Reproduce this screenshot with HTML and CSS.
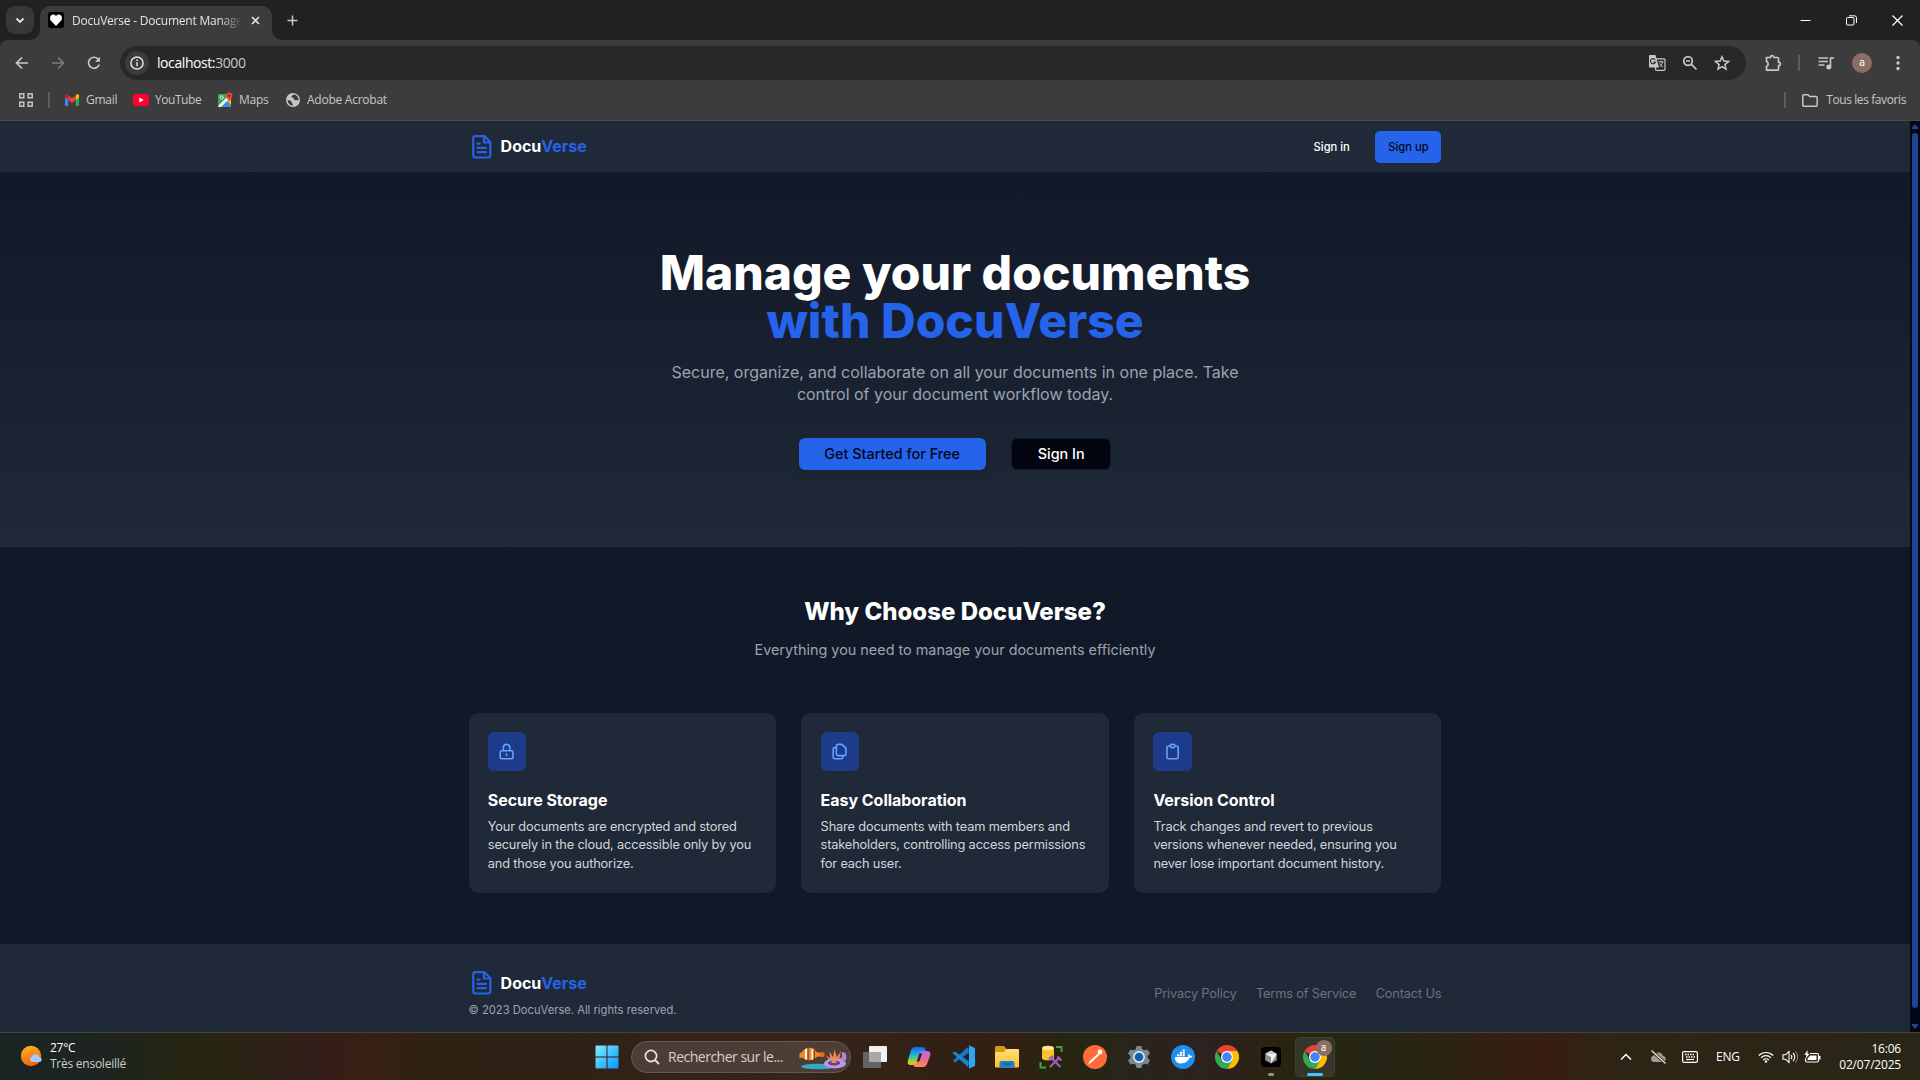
FILE: index.html
```html
<!DOCTYPE html>
<html lang="fr">
<head>
<meta charset="utf-8">
<title>DocuVerse - Document Management</title>
<link rel="stylesheet" href="styles.css">
</head>
<body>
<svg class="defs" width="0" height="0">
  <defs>
    <linearGradient id="win" x1="0" y1="0" x2="1" y2="1"><stop offset="0" stop-color="#7df0ff"/><stop offset="1" stop-color="#0a93ff"/></linearGradient>
    <linearGradient id="sun" x1="0" y1="0" x2="0.3" y2="1"><stop offset="0" stop-color="#fbb829"/><stop offset="1" stop-color="#f3650f"/></linearGradient>
    <linearGradient id="cpa" x1="0" y1="0" x2="0" y2="1"><stop offset="0" stop-color="#1b63e8"/><stop offset=".45" stop-color="#1fb4d8"/><stop offset=".75" stop-color="#8fce4a"/><stop offset="1" stop-color="#f6c419"/></linearGradient>
    <linearGradient id="cpb" x1="0" y1="0" x2="0" y2="1"><stop offset="0" stop-color="#b06bf2"/><stop offset=".5" stop-color="#f0629a"/><stop offset="1" stop-color="#ff8d54"/></linearGradient>
    <linearGradient id="fold" x1="0" y1="0" x2="0" y2="1"><stop offset="0" stop-color="#ffe07a"/><stop offset="1" stop-color="#fbc02d"/></linearGradient>
    <symbol id="doc" viewBox="0 0 24 24"><g fill="none" stroke="#2563eb" stroke-width="2" stroke-linecap="round" stroke-linejoin="round"><path d="M14.5 2H6a2 2 0 0 0-2 2v16a2 2 0 0 0 2 2h12a2 2 0 0 0 2-2V7.500L14.500 2z"/><path d="M14 2v6h6M16 13H8M16 17H8M10 9H8"/></g></symbol>
    <symbol id="chrome" viewBox="0 0 48 48">
      <path fill="#ea4335" d="M24 24 3.200 12A24 24 0 0 1 44.800 12H24z"/>
      <path fill="#fbbc04" d="M44.800 12A24 24 0 0 1 24 48L34.400 30 24 12z"/>
      <path fill="#34a853" d="M3.200 12A24 24 0 0 0 24 48L34.400 30 24 24 13.600 30z"/>
      <circle cx="24" cy="24" r="12" fill="#fff"/><circle cx="24" cy="24" r="9.500" fill="#4285f4"/>
    </symbol>
  </defs>
</svg>

<div class="tabstrip">
  <div class="tabsearch"><svg width="10" height="7" viewBox="0 0 10 7"><path d="M1.500 1.500 5 5l3.500-3.500" fill="none" stroke="#e3e3e3" stroke-width="1.800"/></svg></div>
  <div class="tab">
    <svg class="favicon" width="16" height="16" viewBox="0 0 16 16"><rect width="16" height="16" rx="2.500" fill="#000"/><path d="M8 14 2.700 8.600A3.200 3.200 0 0 1 2 6.200C2 4 3.500 2.500 5.200 2.500 6.500 2.500 7.500 3.200 8 4c.5-.8 1.500-1.500 2.800-1.500C12.500 2.500 14 4 14 6.200c0 .9-.3 1.800-.8 2.400z" fill="#fff"/></svg>
    <span class="tabtitle">DocuVerse - Document Manage</span>
    <svg width="9" height="9" viewBox="0 0 9 9"><path d="M1 1l7 7M8 1 1 8" stroke="#e3e3e3" stroke-width="1.600"/></svg>
  </div>
  <svg class="newtab" width="11" height="11" viewBox="0 0 11 11"><path d="M5.500 .5v10M.5 5.500h10" stroke="#c8c8c8" stroke-width="1.500"/></svg>
  <div class="winbtns">
    <svg width="11" height="11" viewBox="0 0 11 11"><path d="M.5 5.500h10" stroke="#fff" stroke-width="1"/></svg>
    <svg width="11" height="11" viewBox="0 0 11 11"><g fill="none" stroke="#fff"><rect x=".5" y="2.500" width="7.500" height="7.500" rx="1"/><path d="M3 .8h5.500a2 2 0 0 1 2 2V8"/></g></svg>
    <svg width="11" height="11" viewBox="0 0 11 11"><path d="M.5.5l10 10M10.500.5l-10 10" stroke="#fff" stroke-width="1.200"/></svg>
  </div>
</div>

<div class="toolbar">
  <div class="navrow">
    <div class="navicons">
      <svg width="16" height="16" viewBox="0 0 16 16"><path d="M14 8H3M8 2.500 2.500 8 8 13.500" fill="none" stroke="#c7c7c7" stroke-width="1.700"/></svg>
      <svg width="16" height="16" viewBox="0 0 16 16"><path d="M2 8h11M8 2.500 13.500 8 8 13.500" fill="none" stroke="#7c7c7c" stroke-width="1.700"/></svg>
      <svg width="16" height="16" viewBox="0 0 16 16"><path d="M13.200 9.500A5.500 5.500 0 1 1 12 4l1.300 1.500" fill="none" stroke="#c7c7c7" stroke-width="1.700"/><path d="M14 1.800v5H9z" fill="#c7c7c7"/></svg>
    </div>
    <div class="omnibox">
      <div class="info"><svg width="14" height="14" viewBox="0 0 14 14"><circle cx="7" cy="7" r="6.100" fill="none" stroke="#e3e3e3" stroke-width="1.500"/><path d="M7 6.200v4M7 3.600v1.500" stroke="#e3e3e3" stroke-width="1.500"/></svg></div>
      <span class="url">localhost:<i>3000</i></span>
      <div class="omniicons">
        <svg width="18" height="18" viewBox="0 0 18 18"><rect x="7.500" y="4.800" width="9.500" height="11.500" rx="1" fill="none" stroke="#c7c7c7" stroke-width="1.200"/><path d="M1.500 1h6l3.500 12.500H2a1 1 0 0 1-1-1V2z" fill="#c7c7c7"/><path d="M7.200 5.700A2.600 2.600 0 1 0 7.500 8H5.200" fill="none" stroke="#333" stroke-width="1.200"/><path d="M10.500 7.800h5M13 6.800v1M14.500 8c-.5 2.500-2 3.800-3 4.500M11.500 9.500c.8 1.800 2 2.500 3.500 3.500" fill="none" stroke="#c7c7c7"/></svg>
        <svg width="16" height="16" viewBox="0 0 16 16"><g fill="none" stroke="#c7c7c7" stroke-width="1.700"><circle cx="6" cy="6" r="4.300"/><path d="M9.200 9.200 14.500 14.500M4 6h4"/></g></svg>
        <svg width="16" height="16" viewBox="0 0 16 16"><path d="M8 1.800l1.800 4.300 4.700.4-3.600 3.100 1.100 4.600L8 11.700l-4 2.500 1.100-4.600L1.500 6.500l4.700-.4z" fill="none" stroke="#c7c7c7" stroke-width="1.500"/></svg>
      </div>
    </div>
    <div class="actions">
      <svg width="18" height="18" viewBox="0 0 18 18"><path d="M2.500 3.500h4a1.800 1.800 0 0 1 3.600 0h3.400a1 1 0 0 1 1 1v3.600a1.800 1.800 0 0 1 0 3.600v3.500a1 1 0 0 1-1 1h-11v-3.700a2.700 2.700 0 0 0 0-5z" fill="none" stroke="#c7c7c7" stroke-width="1.700"/></svg>
      <b class="vbar"></b>
      <svg width="16" height="14" viewBox="0 0 16 14"><path d="M.5 2h9.500M.5 5.500h9.500M.5 9h6M12.500 11V2H16" fill="none" stroke="#c7c7c7" stroke-width="1.600"/><circle cx="10.800" cy="11" r="2.500" fill="#c7c7c7"/></svg>
      <span class="avatar">a</span>
      <svg width="4" height="16" viewBox="0 0 4 16"><g fill="#c7c7c7"><circle cx="2" cy="2.500" r="1.700"/><circle cx="2" cy="8" r="1.700"/><circle cx="2" cy="13.500" r="1.700"/></g></svg>
    </div>
  </div>
  <div class="bookmarks">
    <svg width="14" height="14" viewBox="0 0 14 14"><g fill="none" stroke="#c7c7c7" stroke-width="1.500"><rect x=".8" y=".8" width="4" height="4"/><rect x="9.200" y=".8" width="4" height="4"/><rect x=".8" y="9.200" width="4" height="4"/><rect x="9.200" y="9.200" width="4" height="4"/></g></svg>
    <b class="vbar first"></b>
    <div class="bm gmail"><svg width="14" height="12" viewBox="0 0 14 12"><path d="M0 2v9a1 1 0 0 0 1 1h2.300V4.500z" fill="#4285f4"/><path d="M14 2v9a1 1 0 0 1-1 1h-2.300V4.500z" fill="#34a853"/><path d="M10.700 1.500 12 .4c.9-.6 2 0 2 1.200V3.500l-3.300 2.600z" fill="#fbbc04"/><path d="M3.300 6.100V1.500L7 4.300l3.700-2.800v4.600L7 9z" fill="#ea4335"/><path d="M0 1.600v1.900l3.300 2.600V1.500L2 .4C1.100-.2 0 .4 0 1.600z" fill="#c5221f"/></svg><span>Gmail</span></div>
    <div class="bm youtube"><svg width="16" height="12" viewBox="0 0 16 12"><rect width="16" height="12" rx="3" fill="#ff0033"/><path d="M6.300 3.500 10.700 6 6.300 8.500z" fill="#fff"/></svg><span>YouTube</span></div>
    <div class="bm maps"><svg width="15" height="16" viewBox="0 0 15 16"><rect x="0" y="2" width="13" height="13" rx="1" fill="#34a853"/><path d="M1 15 7 8l6 6v1z" fill="#4285f4"/><path d="M0 14 11 3l2 4-5 3-5 5H1z" fill="#f1f3f4"/><path d="M9 8.500 13 13V7z" fill="#fbc02d"/><circle cx="3.700" cy="5.500" r="1.600" fill="none" stroke="#fff" stroke-width=".9"/><path d="M11.200.5a3.300 3.300 0 0 1 3.300 3.400C14.500 6 12 7 11.200 10 10.500 7 8 6 8 3.900A3.300 3.300 0 0 1 11.200.5z" fill="#ea4335"/><circle cx="11.200" cy="3.800" r="1.200" fill="#8c1d13"/></svg><span>Maps</span></div>
    <div class="bm adobe"><svg width="14" height="14" viewBox="0 0 14 14"><circle cx="7" cy="7" r="7" fill="#c4c7c9"/><path d="M1.500 7.500c2-.8 4 .2 4 1.500 0 1.500 1.500 1 1.500 3.500-3 0-5-2-5.500-5zM8 1.500c-1 1-2.500 1-2.500 2.500S8 4.500 8 6s2 1.500 2.500 1l2 .5c.3-3-1.500-5.500-4.500-6z" fill="#3c3c3c"/></svg><span>Adobe Acrobat</span></div>
    <b class="vbar last"></b>
    <div class="bm all"><svg width="16" height="13" viewBox="0 0 16 13"><path d="M.8 1.800a1 1 0 0 1 1-1h4.200l1.600 1.700h6.600a1 1 0 0 1 1 1v7.700a1 1 0 0 1-1 1H1.800a1 1 0 0 1-1-1z" fill="none" stroke="#c7c7c7" stroke-width="1.500"/></svg><span>Tous les favoris</span></div>
  </div>
</div>

<div class="viewport">
  <div class="page">
    <header class="site-header"><div class="container">
      <div class="logo"><svg><use href="#doc"/></svg><span>Docu<em>Verse</em></span></div>
      <nav><a class="btn ghost">Sign in</a><a class="btn primary">Sign up</a></nav>
    </div></header>
    <section class="hero">
      <h1>Manage your documents<br><em>with DocuVerse</em></h1>
      <p>Secure, organize, and collaborate on all your documents in one place. Take control of your document workflow today.</p>
      <div class="cta"><a class="btn primary lg">Get Started for Free</a><a class="btn outline lg">Sign In</a></div>
    </section>
    <section class="features">
      <h2>Why Choose DocuVerse?</h2>
      <p class="sub">Everything you need to manage your documents efficiently</p>
      <div class="cards">
        <article class="card">
          <div class="ico"><svg viewBox="0 0 24 24"><path d="M12 15v2m-6 4h12a2 2 0 002-2v-6a2 2 0 00-2-2H6a2 2 0 00-2 2v6a2 2 0 002 2zm10-10V7a4 4 0 00-8 0v4h8z"/></svg></div>
          <h3>Secure Storage</h3>
          <p>Your documents are encrypted and stored securely in the cloud, accessible only by you and those you authorize.</p>
        </article>
        <article class="card">
          <div class="ico"><svg viewBox="0 0 24 24"><path d="M8 7v8a2 2 0 002 2h6M8 7V5a2 2 0 012-2h4.586a1 1 0 01.707.293l4.414 4.414a1 1 0 01.293.707V15a2 2 0 01-2 2h-2M8 7H6a2 2 0 00-2 2v10a2 2 0 002 2h8a2 2 0 002-2v-2"/></svg></div>
          <h3>Easy Collaboration</h3>
          <p>Share documents with team members and stakeholders, controlling access permissions for each user.</p>
        </article>
        <article class="card">
          <div class="ico"><svg viewBox="0 0 24 24"><path d="M9 5H7a2 2 0 00-2 2v12a2 2 0 002 2h10a2 2 0 002-2V7a2 2 0 00-2-2h-2M9 5a2 2 0 002 2h2a2 2 0 002-2M9 5a2 2 0 012-2h2a2 2 0 012 2"/></svg></div>
          <h3>Version Control</h3>
          <p>Track changes and revert to previous versions whenever needed, ensuring you never lose important document history.</p>
        </article>
      </div>
    </section>
    <footer class="site-footer"><div class="container">
      <div>
        <div class="logo"><svg><use href="#doc"/></svg><span>Docu<em>Verse</em></span></div>
        <p class="copy">© 2023 DocuVerse. All rights reserved.</p>
      </div>
      <div class="links"><a>Privacy Policy</a><a>Terms of Service</a><a>Contact Us</a></div>
    </div></footer>
  </div>
  <div class="scrollbar">
    <svg width="6" height="5" viewBox="0 0 6 5"><path d="M3 0l3 3.500V5H0V3.500z" fill="#1e4690"/></svg>
    <div class="thumb"></div>
    <svg width="6" height="5" viewBox="0 0 6 5"><path d="M3 5 0 1.500V0h6v1.500z" fill="#1e4690"/></svg>
  </div>
</div>

<div class="taskbar">
  <div class="weather">
    <svg width="24" height="22" viewBox="0 0 24 22"><circle cx="11" cy="11" r="10.200" fill="url(#sun)"/><path d="M11.500 17a3 3 0 0 1 .5-5.500 4 4 0 0 1 7.500.5 2.600 2.600 0 0 1 .5 5z" fill="#a9cbf8"/></svg>
    <div><span>27°C</span><span class="dim">Très ensoleillé</span></div>
  </div>
  <div class="apps">
    <div class="app"><svg width="24" height="24" viewBox="0 0 24 24"><path d="M.5 1.500a1 1 0 0 1 1-1h10v11H.5zM12.500.5h10a1 1 0 0 1 1 1v10h-11zM.5 12.500h11v11h-10a1 1 0 0 1-1-1zM12.500 12.500h11v10a1 1 0 0 1-1 1h-10z" fill="url(#win)"/></svg></div>
    <div class="search">
      <svg width="16" height="16" viewBox="0 0 16 16"><circle cx="7" cy="7" r="5.600" fill="none" stroke="#e8e4e2" stroke-width="1.700"/><path d="M11 11l4 4" stroke="#e8e4e2" stroke-width="1.800"/></svg>
      <span>Rechercher sur le...</span>
      <svg width="50" height="26" viewBox="0 0 50 26">
        <ellipse cx="20" cy="22.500" rx="17" ry="2.800" fill="#38a8c4"/>
        <path d="M1.500 9.500 4 8C7 3 15 2 18.500 8l4 .8v3.400l-4 .8C15 17.500 7 17 4.500 13.500L1.500 14.500z" fill="#f28a1e"/><path d="M7 5.500 9.500 4v12L7 15zM13.500 4.500l2 1v9.500l-2 1z" fill="#fff3e4"/><path d="M10 4v12M16.200 6v9" stroke="#452a18"/>
        <circle cx="24" cy="10.500" r="2.600" fill="#f06a15"/>
        <path d="M31 17 28 11l4 3.500-.5-7 3.500 5.500 1.500-7.500 2.500 7.500 4-6-1.500 7.500 4.500-2.500-4 5.500z" fill="#f0804c"/>
        <ellipse cx="37" cy="19.500" rx="11" ry="5" fill="#b79be6"/><ellipse cx="36" cy="19" rx="6" ry="2.500" fill="#6a3b74"/><path d="M33 19l3-5 3 5z" fill="#ff8d46"/><path d="M44 8c4 0 5 3 4 8l-4 3z" fill="#a88ad8"/>
      </svg>
    </div>
    <div class="app"><svg width="24" height="22" viewBox="0 0 24 22"><rect x="6" width="18" height="16" rx="1" fill="#f0f0f0"/><rect y="6" width="18" height="16" rx="1" fill="#646464"/><rect x="6" y="6" width="12" height="10" fill="#a8a8a8"/></svg></div>
    <div class="app"><svg width="24" height="22" viewBox="0 0 24 22"><path d="M8 1h7c2 0 3 1 3.500 3l.5 2h-3c-2 0-3 1-3.500 3L10 16c-.5 2-1.500 3-3.500 3H4c-3 0-4-2-3-5L4 4c.7-2 2-3 4-3z" fill="url(#cpa)"/><path d="M16 21H9c-1.500 0-2.500-1-3-2.500 2 0 3.500-.8 4.200-3L12.500 8c.7-2 1.700-3 3.700-3H20c3 0 4 2 3 5l-3 8c-.7 2-2 3-4 3z" fill="url(#cpb)"/><path d="M12.500 7.500h2.600l-2.800 8H9.700z" fill="#2b2017"/></svg></div>
    <div class="app"><svg width="24" height="24" viewBox="0 0 24 24"><path d="M2 15.500 17 2l1 5.500L4 17.500z" fill="#0f7bc6"/><path d="M2 8.500 17 22l1-5.500L4 6.500 1 8z" fill="#1488d4"/><path d="M17 0l6 2.500c.6.3 1 .7 1 1.300v16.400c0 .6-.4 1-1 1.300L17 24c1-.4 1-1 1-2V2c0-1 0-1.600-1-2z" fill="#2aa7f3"/></svg></div>
    <div class="app"><svg width="24" height="22" viewBox="0 0 24 22"><path d="M0 1.500A1.500 1.500 0 0 1 1.500 0H9l2.500 3V7H0z" fill="#d99a10"/><path d="M0 6h9l2.500-3H23a1 1 0 0 1 1 1v16.500a1 1 0 0 1-1 1H1a1 1 0 0 1-1-1z" fill="url(#fold)"/><path d="M4.500 21.500V17a2 2 0 0 1 2-2h11a2 2 0 0 1 2 2v4.500z" fill="#1583d4"/><path d="M8 18h8" stroke="#0c5fa8" stroke-width="1.500"/></svg></div>
    <div class="app"><svg width="24" height="24" viewBox="0 0 24 24"><path d="M3 3v10a6 2.300 0 0 0 12 0V3z" fill="#f6c22e"/><ellipse cx="9" cy="3" rx="6" ry="2.300" fill="#ffe79a"/><path d="M17 2h5.500v5M1.500 17v5.500H7" fill="none" stroke="#43a047" stroke-width="2"/><path d="M11 22l9-9M21.500 22 12 12.500M18.500 11.500l4 4M10 14l4-3" fill="none" stroke="#a35bc4" stroke-width="2.200"/></svg></div>
    <div class="app"><svg width="24" height="24" viewBox="0 0 24 24"><circle cx="12" cy="12" r="12" fill="#ff6c37"/><path d="M5 19.500 7 15.800l8-7.300 1.300 1.300L9 17z" fill="#fff"/><circle cx="17" cy="7" r="2.400" fill="#fff"/></svg></div>
    <div class="app"><svg width="24" height="24" viewBox="0 0 24 24"><path d="M9.500 1h5l.8 3.200 2 1.100 3.200-.9 2.500 4.200-2.300 2.300v2.200l2.300 2.300-2.500 4.200-3.200-.9-2 1.100-.8 3.200h-5l-.8-3.200-2-1.100-3.200.9L1 15.400l2.300-2.300v-2.200L1 8.600l2.500-4.200 3.200.9 2-1.100z" fill="#7d8791"/><circle cx="12" cy="12" r="6" fill="#dde5ec"/><circle cx="12" cy="12" r="4.300" fill="#0f5fae"/></svg></div>
    <div class="app"><svg width="24" height="24" viewBox="0 0 24 24"><circle cx="12" cy="12" r="12" fill="#1d8fec"/><path d="M4 12h13c.2-1.300 0-2.300.8-3.300.8.600 1.200 1.400 1.200 2.200.800-.2 1.600-.1 2.300.3-.5 1.200-1.500 1.600-2.800 1.600C17 16.800 14 18.500 10 18.500c-4 0-6.300-2.500-6-6.500zM6 9.300h2.200v2H6zM8.800 9.300H11v2H8.800zM11.600 9.300h2.200v2h-2.200zM8.800 6.800H11v2H8.800zM11.600 6.800h2.200v2h-2.200zM11.600 4.500h2.200v1.800h-2.200z" fill="#fff"/></svg></div>
    <div class="app"><svg width="24" height="24"><use href="#chrome"/></svg></div>
    <div class="app"><svg width="20" height="20" viewBox="0 0 20 20"><rect width="20" height="20" rx="4" fill="#000"/><path d="M10 3.500l5.800 3.300v6.500L10 16.500l-5.800-3.200V6.800z" fill="#8e8e8e"/><path d="M4.200 6.800 10 3.500l5.800 3.300z" fill="#c9c9c9"/><path d="M4.200 6.800h11.600L10 16.500V10z" fill="#f2f2f2"/></svg><i class="dot"></i></div>
    <div class="app active"><svg width="24" height="24"><use href="#chrome"/></svg><i class="line"></i><span class="badge">a</span></div>
  </div>
  <div class="tray">
    <svg width="12" height="8" viewBox="0 0 12 8"><path d="M1 6.500 6 1.500l5 5" fill="none" stroke="#fff" stroke-width="1.500"/></svg>
    <svg width="17" height="14" viewBox="0 0 17 14"><path d="M4 12a3.300 3.300 0 0 1-.3-6.500 5 5 0 0 1 9.300.3A3.200 3.200 0 0 1 13.500 12z" fill="#a39c92"/><path d="M1.500.5l14 13" stroke="#2e2716" stroke-width="3"/><path d="M1.500.5l14 13" stroke="#f0f0f0" stroke-width="1.100"/></svg>
    <svg width="16" height="12" viewBox="0 0 16 12"><rect x=".6" y=".6" width="14.800" height="10.800" rx="1.500" fill="none" stroke="#fff" stroke-width="1.200"/><path d="M3 3.500h10M4 6h9" stroke="#fff" stroke-width="1.300" stroke-dasharray="1.500 1"/><path d="M4 8.500h8" stroke="#fff" stroke-width="1.200"/></svg>
    <span class="lang">ENG</span>
    <svg width="16" height="12" viewBox="0 0 16 12"><g fill="none" stroke="#fff" stroke-width="1.200"><path d="M.8 4.500a10.200 10.200 0 0 1 14.400 0M3 6.800a7 7 0 0 1 10 0M5.200 9a4 4 0 0 1 5.600 0"/></g><circle cx="8" cy="10.500" r="1.300" fill="#fff"/></svg>
    <svg class="sound" width="17" height="14" viewBox="0 0 17 14"><g fill="none" stroke="#fff" stroke-width="1.100"><path d="M1 4.800h2.500L7 1.500v11L3.500 9.200H1z"/><path d="M9 5a3 3 0 0 1 0 4M11 3a5.500 5.500 0 0 1 0 8"/><path d="M13.300 1.300a8 8 0 0 1 0 11.400" stroke="#807a6c"/></g></svg>
    <svg width="17" height="14" viewBox="0 0 17 14"><path d="M6 3.500h7a1.500 1.500 0 0 1 1.500 1.500v5.500A1.500 1.500 0 0 1 13 12H3a1.500 1.500 0 0 1-1.500-1.500V8.500" fill="none" stroke="#fff" stroke-width="1.200"/><path d="M6 5.500h6.500V10H3.500V8.800zM15 6h1.500v3.500H15zM3.500 0 .5 5h2L1.500 9 5.500 3.800h-2z" fill="#fff"/></svg>
    <div class="clock"><span>16:06</span><span>02/07/2025</span></div>
  </div>
</div>
</body>
</html>
```
FILE: styles.css
```css
* { box-sizing: border-box; margin: 0; padding: 0; }
body {
  width: 1920px; height: 1080px; overflow: hidden;
  display: flex; flex-direction: column;
  background: #1f2221; color: #e3e3e3;
  font-family: "Open Sans", "Noto Sans", sans-serif; font-size: 12px;
}
em, i { font-style: normal; }
svg { display: block; flex: none; }
.defs { position: absolute; }

/* Browser frame */
.tabstrip { height: 40px; flex: none; display: flex; background: #1f2221; }
.tabsearch { width: 28px; height: 28px; margin: 6px 6px 0; border-radius: 9px; background: #373938; display: grid; place-items: center; }
.tab { position: relative; width: 232px; height: 34px; margin-top: 6px; padding: 0 11px 6px 8px; display: flex; align-items: center; border-radius: 10px 10px 0 0; background: #3c3c3c; }
.tab::before, .tab::after { content: ""; position: absolute; bottom: 0; width: 10px; height: 10px; }
.tab::before { left: -10px; background: radial-gradient(circle at 0 0, transparent 9.500px, #3c3c3c 10px); }
.tab::after { right: -10px; background: radial-gradient(circle at 100% 0, transparent 9.500px, #3c3c3c 10px); }
.tabtitle { width: 168px; margin: 0 11px 0 8px; overflow: hidden; white-space: nowrap; letter-spacing: -0.22px; -webkit-mask: linear-gradient(90deg, #000 148px, transparent 170px); mask: linear-gradient(90deg, #000 148px, transparent 170px); }
.newtab { margin: 15px 0 0 14.5px; }
.winbtns { margin: 15px 17px 0 auto; display: flex; gap: 35px; }
.toolbar { height: 81px; flex: none; background: #3c3c3c; border-bottom: 1px solid #4a4a48; border-radius: 8px 8px 0 0; }
.navrow { height: 46px; display: flex; align-items: center; }
.navicons { width: 120px; padding-left: 14px; display: flex; gap: 20px; }
.omnibox { width: 1626px; height: 34px; padding: 0 16px 0 5px; border-radius: 17px; background: #282828; display: flex; align-items: center; }
.info { width: 24px; height: 24px; border-radius: 50%; background: #3c3c3c; display: grid; place-items: center; }
.url { margin: 0 0 1px 8px; font-size: 14px; letter-spacing: -0.42px; color: #fff; }
.url i { color: #c7c7c7; }
.omniicons { margin-left: auto; display: flex; align-items: center; gap: 16px; }
.actions { display: flex; align-items: center; padding-left: 18px; }
.vbar { width: 2px; height: 16px; background: #5c5c5c; }
.actions .vbar { margin: 0 18px 0 16px; }
.avatar { width: 20px; height: 20px; margin: 0 24px 0 18px; border-radius: 50%; background: #8d6e63; color: #fff; font: 11px/19px Roboto, sans-serif; text-align: center; }
.bookmarks { height: 28px; padding: 0 14px 0 19px; display: flex; align-items: center; color: #c7c7c7; }
.vbar.first { margin: 0 15px; }
.bm { display: flex; align-items: center; gap: 6px; white-space: nowrap; letter-spacing: -0.25px; }
.bm span { margin-bottom: 1px; }
.gmail { width: 68px; gap: 7px; }
.youtube { width: 85px; letter-spacing: -0.45px; }
.maps { width: 68px; }
.adobe { gap: 7px; }
.vbar.last { margin: 0 16px 0 auto; }
.bm.all { gap: 8px; letter-spacing: -0.4px; }

/* Web page */
.viewport { height: 911px; flex: none; display: flex; overflow: hidden; background: #111827; }
.page { width: 1910px; font-family: Inter, sans-serif; color: #fff; }
.page em { color: #2563eb; }
.container { width: 972.8px; margin: 0 auto; display: flex; align-items: center; justify-content: space-between; }
.site-header { height: 51.2px; background: #1f2937; }
.site-header .container { height: 51.2px; }
.logo { display: flex; align-items: center; gap: 6.4px; font-size: 16px; font-weight: 700; line-height: 22.4px; }
.logo svg { width: 25.6px; height: 25.6px; }
nav { display: flex; gap: 12.8px; }
.btn { height: 32px; padding: 0 12.8px; display: flex; align-items: center; border-radius: 4.8px; font-size: 11.2px; font-weight: 500; white-space: nowrap; }
.primary { background: #2563eb; color: #020817; }
.lg { padding: 0 25.6px; font-size: 14.4px; border-radius: 6px; }
.primary.lg { box-shadow: 0 4px 8px rgba(0, 0, 0, .1); }
.outline { background: #020510; border: 1px solid #131c2e; }
.hero { height: 374.4px; padding-top: 76.8px; background: linear-gradient(#111827, #1f2937); text-align: center; }
.hero h1 { font-size: 48px; line-height: 48px; font-weight: 800; letter-spacing: 0; }
.hero p { width: 614.4px; margin: 16px auto 32px; font-size: 16px; line-height: 22.4px; color: #9ca3af; }
.cta { display: flex; justify-content: center; gap: 25.6px; }
.features { height: 397.2px; padding-top: 51.2px; text-align: center; }
.features h2 { font-size: 24px; line-height: 28.8px; font-weight: 800; }
.sub { margin-top: 12.8px; font-size: 14.4px; line-height: 22.4px; color: #9ca3af; }
.cards { width: 972.8px; margin: 51.2px auto 0; display: grid; grid-template-columns: repeat(3, 1fr); gap: 25.6px; text-align: left; }
.card { height: 179.8px; padding: 19.2px; border-radius: 9.6px; background: #1f2937; }
.ico { width: 38.4px; height: 38.4px; border-radius: 6.4px; background: #1e3a8a; display: grid; place-items: center; }
.ico svg { width: 19.2px; height: 19.2px; fill: none; stroke: #60a5fa; stroke-width: 2; stroke-linecap: round; stroke-linejoin: round; }
.card h3 { margin-top: 18.2px; font-size: 16px; line-height: 22.4px; font-weight: 700; letter-spacing: -0.03px; }
.card p { margin-top: 6.8px; font-size: 12.8px; line-height: 18.4px; letter-spacing: -0.16px; color: #d1d5db; }
.site-footer { height: 90px; padding-top: 26.4px; background: #1f2937; }
.copy { margin-top: 6.4px; font-size: 11.2px; line-height: 16px; color: #9ca3af; }
.links { margin-bottom: 1.6px; display: flex; gap: 19.4px; font-size: 12.8px; letter-spacing: -0.17px; color: #6b7280; }
.scrollbar { width: 10px; padding: 3px 2px; display: flex; flex-direction: column; justify-content: space-between; background: #020817; }
.thumb { width: 6px; height: 875px; margin-bottom: 13px; border-radius: 3px; background: #1e4690; }

/* Windows taskbar */
.taskbar { position: relative; height: 48px; display: flex; justify-content: space-between; border-top: 1px solid #4b4238; color: #fff;
  background: linear-gradient(90deg, #1a2423 0, #1e2520 110px, #242512 175px, #292414 230px, #321e19 310px, #381f14 360px, #302115 430px, #302116 560px, #35241a 800px, #322014 960px, #351f14 1000px, #26250f 1060px, #28251a 1120px, #2c2220 1200px, #2c2118 1240px, #29250f 1290px, #252615 1370px, #2c2415 1440px, #391d12 1540px, #2f2415 1600px, #2c2515 1720px, #292617 1920px); }
.weather { padding: 0 0 1px 20px; display: flex; align-items: center; gap: 6px; }
.weather span { display: block; line-height: 16px; letter-spacing: -0.25px; }
.weather .dim { color: #d0cdc8; }
.apps { position: absolute; left: 584.5px; top: 0; height: 47px; display: flex; align-items: center; }
.app { position: relative; width: 44px; height: 40px; display: grid; place-items: center; }
.search { width: 220px; height: 32px; margin: 0 1.5px 0 2.5px; padding: 0 2px 0 12px; display: flex; align-items: center; border: 1px solid #675950; border-radius: 16px; background: #4c3e36; }
.search span { flex: 1; margin: 0 0 1px 8px; font-size: 14px; letter-spacing: -0.5px; color: #d6d0cc; white-space: nowrap; }
.active { width: 40px; margin-left: 2px; border: 1px solid #40402f; border-radius: 5px; background: #35362a; }
.dot, .line { position: absolute; bottom: 1px; left: 19px; width: 6px; height: 3px; border-radius: 2px; background: #9a958c; }
.line { bottom: 0; left: 11px; width: 16px; background: #4cc2ff; }
.badge { position: absolute; left: 20px; top: 2px; width: 16px; height: 16px; border-radius: 50%; background: #8d6e63; font: 10px/15px Roboto, sans-serif; text-align: center; }
.tray { margin-left: auto; padding-right: 19px; display: flex; align-items: center; }
.tray svg { margin-right: 8px; }
.tray svg:nth-child(1) { margin-right: 18px; }
.tray svg:nth-child(2) { margin-right: 15px; }
.tray svg:nth-child(3) { margin-right: 18px; }
.tray .sound { margin-right: 5px; }
.lang { width: 42px; letter-spacing: -0.2px; }
.clock { width: 72px; text-align: right; white-space: nowrap; }
.clock span { display: block; line-height: 16px; letter-spacing: -0.2px; }
```
